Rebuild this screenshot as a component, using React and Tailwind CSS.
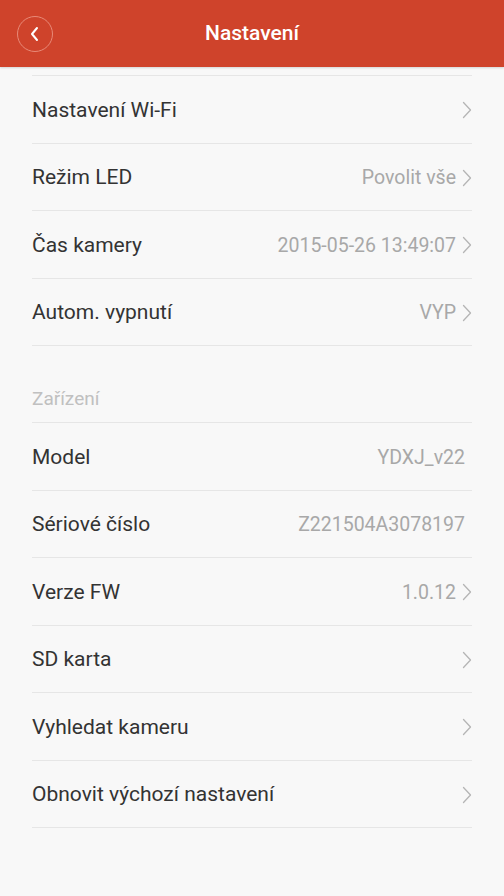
import React from 'react';

const Chevron = () => (
  <svg width="10" height="18" viewBox="0 0 10 18" className="ml-[6px] shrink-0">
    <path d="M1.5 1.5 L8.5 9 L1.5 16.5" fill="none" stroke="#b5b5b5" strokeWidth="1.3" strokeLinecap="round" strokeLinejoin="round" />
  </svg>
);

const Row = ({ label, value, arrow = true }) => (
  <div className="h-[67.5px] flex items-center justify-between pt-[2px] border-b border-[#e6e6e6]">
    <span className="text-[21px] text-[#333333]">{label}</span>
    <div className="flex items-center">
      {value && (
        <span className={`text-[19.5px] text-[#a8a8a8] ${arrow ? '' : 'mr-[7px]'}`}>{value}</span>
      )}
      {arrow && <Chevron />}
    </div>
  </div>
);

const App = () => {
  const general = [
    { label: 'Nastavení Wi-Fi' },
    { label: 'Režim LED', value: 'Povolit vše' },
    { label: 'Čas kamery', value: '2015-05-26 13:49:07' },
    { label: 'Autom. vypnutí', value: 'VYP' },
  ];
  const device = [
    { label: 'Model', value: 'YDXJ_v22', arrow: false },
    { label: 'Sériové číslo', value: 'Z221504A3078197', arrow: false },
    { label: 'Verze FW', value: '1.0.12' },
    { label: 'SD karta' },
    { label: 'Vyhledat kameru' },
    { label: 'Obnovit výchozí nastavení' },
  ];

  return (
    <div className="w-full min-h-[896px] bg-[#f8f8f8]" style={{ fontFamily: 'Roboto, "Noto Sans", sans-serif' }}>
      <div className="h-[67px] bg-[#cf432b] flex items-center relative shadow-[0_1px_2px_rgba(0,0,0,0.15)]">
        <button className="absolute left-[17px] top-[16px] w-[36px] h-[36px] rounded-full border border-[#e88a78] flex items-center justify-center">
          <svg width="12" height="16" viewBox="0 0 12 16">
            <path d="M8 2 L3 8 L8 14" fill="none" stroke="#ffffff" strokeWidth="2" strokeLinecap="round" strokeLinejoin="round" />
          </svg>
        </button>
        <h1 className="w-full text-center text-white text-[21px] font-medium">Nastavení</h1>
      </div>

      <div className="px-[32px]">
        <div className="mt-[8px] border-t border-[#e6e6e6]">
          {general.map((r) => (
            <Row key={r.label} {...r} />
          ))}
        </div>

        <div className="h-[77px] flex items-end pb-[9px] border-b border-[#e6e6e6]">
          <span className="text-[19px] text-[#c0c0c0]">Zařízení</span>
        </div>

        {device.map((r) => (
          <Row key={r.label} {...r} />
        ))}
      </div>
    </div>
  );
};

export default App;
